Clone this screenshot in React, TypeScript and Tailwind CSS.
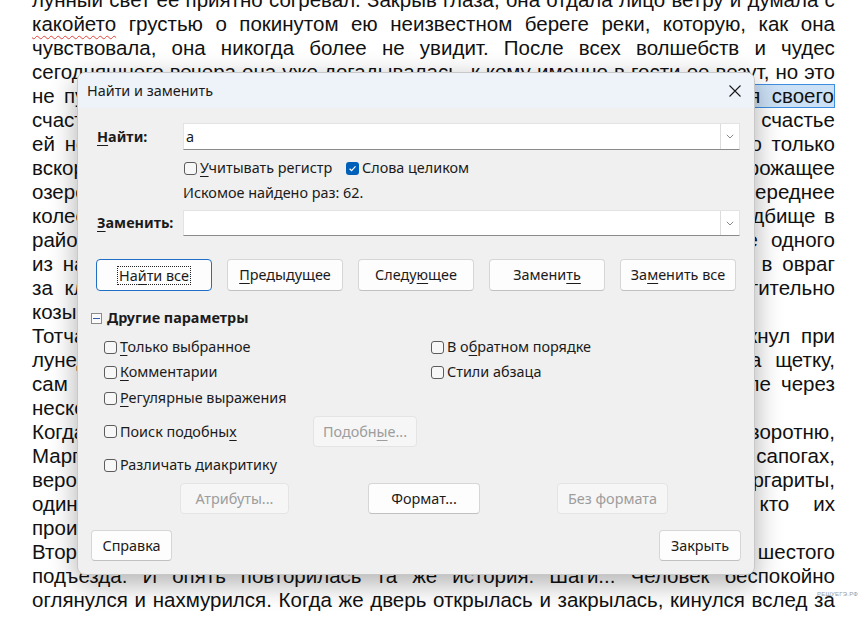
import React from "react";

type Line = { t: string; end?: boolean };

const lines: Line[] = [
  { t: "лунный свет ее приятно согревал. Закрыв глаза, она отдала лицо ветру и думала с" },
  { t: "какойето грустью о покинутом ею неизвестном береге реки, которую, как она" },
  { t: "чувствовала, она никогда более не увидит. После всех волшебств и чудес" },
  { t: "сегодняшнего вечера она уже догадывалась, к кому именно в гости ее везут, но это" },
  { t: "не пугало ее. Надежда на то, что там ей удастся добиться возвращения своего" },
  { t: "счастья, делала ее бесстрашной. Впрочем, долго мечтать об этом счастье" },
  { t: "ей не пришлось. Не то Азазелло очень хорошо знал свою дорогу, не то только" },
  { t: "вскоре машина пошла на снижение, и Маргарита увидела тусклое и дрожащее" },
  { t: "озеро. Грачи развернулись, и машина пошла вниз так круто, что переднее" },
  { t: "колесо едва не задело верхушки деревьев. Рядом оказалось старое кладбище в" },
  { t: "районе, где кончались могилы; вокруг было совершенно пусто, кроме одного" },
  { t: "из наших героев. Машина свернула, и Азазелло, не глядя, сбросил его в овраг" },
  { t: "за кладбищем, где она тотчас развалилась на части и сгорела отвратительно" },
  { t: "козырнув напоследок.", end: true },
  { t: "Тотчас Азазелло вскочил, обернулся, присел на корточки у дороги и ткнул при" },
  { t: "лунедвижимо стоявшая рядом Гелла неторопливо из сумочки достала щетку," },
  { t: "сам же оглянулся и медленно вышел на дорогу, которая уводила в поле через" },
  { t: "несколько минут.", end: true },
  { t: "Когда Маргарита обернулась, то увидела перед собой знакомую подворотню," },
  { t: "Маргарита заметила в темноте человека в кепке, в плаще и в высоких сапогах," },
  { t: "вероятно, это был кто-то из давних, тайных и верных поклонников Маргариты," },
  { t: "один из тех несчастных, о которых никто не мог сказать, кто их" },
  { t: "происходит знает.", end: true },
  { t: "Второй раз она увидела этого человека уже у самых дверей своего шестого" },
  { t: "подъезда. И опять повторилась та же история. Шаги... Человек беспокойно" },
  { t: "оглянулся и нахмурился. Когда же дверь открылась и закрылась, кинулся вслед за" },
];

function DocLine({ line, idx }: { line: Line; idx: number }) {
  if (line.end) {
    return <div className="h-[24px] leading-[24px] whitespace-nowrap">{line.t}</div>;
  }
  const words = line.t.split(" ");
  return (
    <div className="flex justify-between h-[24px] leading-[24px] whitespace-nowrap">
      {words.map((w, i) => {
        if (idx === 1 && i === 0) {
          return (
            <span key={i} className="underline decoration-wavy decoration-[#e0443a] underline-offset-[4px] decoration-1">
              {w}
            </span>
          );
        }
        if (idx === 4 && i === words.length - 2) {
          return (
            <span key={i} className="flex">
              <span>возвращени</span>
              <span className="bg-[#cce1f6] shadow-[inset_0_0_0_1px_#3f8fe0] pr-[1px]">я&nbsp;&nbsp;своего</span>
            </span>
          );
        }
        if (idx === 4 && i === words.length - 1) return null;
        return <span key={i}>{w}</span>;
      })}
    </div>
  );
}

function Check({ checked }: { checked?: boolean }) {
  if (checked) {
    return (
      <span className="w-[13px] h-[13px] rounded-[3px] bg-[#005fb8] flex items-center justify-center shrink-0">
        <svg width="9" height="9" viewBox="0 0 9 9">
          <path d="M1.6 4.7 L3.6 6.6 L7.5 2.4" fill="none" stroke="white" strokeWidth="1.2" />
        </svg>
      </span>
    );
  }
  return <span className="w-[13px] h-[13px] rounded-[3px] border border-[#5c5c5c] bg-[#f7f7f7] shrink-0" />;
}

function CB({ checked, children }: { checked?: boolean; children: React.ReactNode }) {
  return (
    <div className="flex items-center gap-[3px] whitespace-nowrap">
      <Check checked={checked} />
      <span>{children}</span>
    </div>
  );
}

function U({ children }: { children: React.ReactNode }) {
  return <span className="underline underline-offset-[3px] decoration-1">{children}</span>;
}

function Btn({
  children,
  className,
  disabled,
  focus,
}: {
  children: React.ReactNode;
  className: string;
  disabled?: boolean;
  focus?: boolean;
}) {
  const base = "h-full rounded-[4px] border flex items-center justify-center whitespace-nowrap shrink-0 ";
  const look = disabled
    ? "bg-[#f6f6f6] border-[#e4e4e4] text-[#9d9d9d] "
    : focus
    ? "bg-[#fdfdfd] border-[#1f6fc5] shadow-[inset_0_0_0_1px_#fdfdfd] "
    : "bg-[#fdfdfd] border-[#d6d6d6] border-b-[#c0c0c0] ";
  return (
    <div className={base + look + className}>
      {focus ? <span className="outline-1 outline-dotted outline-[#222] px-[1px] leading-[17px]">{children}</span> : children}
    </div>
  );
}

function Combo({ value }: { value?: string }) {
  return (
    <div className="w-[557px] h-full bg-white border border-[#e3e3e3] border-b-[#8a8a8a] flex items-center justify-between">
      <span className="pl-[2px]">{value ?? ""}</span>
      <span className="w-[19px] h-full border-l border-[#dcdcdc] flex items-center justify-center bg-white">
        <svg width="8" height="5" viewBox="0 0 8 5">
          <path d="M0.8 0.8 L4 4 L7.2 0.8" fill="none" stroke="#7a7a7a" strokeWidth="0.9" />
        </svg>
      </span>
    </div>
  );
}

export default function App() {
  return (
    <div className="relative w-[862px] h-[625px] overflow-hidden bg-white">
      <div className="ml-[32px] w-[803px] -mt-[12px] font-['Liberation_Sans',Arial,sans-serif] text-[20.5px] text-[#111]">
        {lines.map((l, i) => (
          <DocLine key={i} line={l} idx={i} />
        ))}
      </div>

      <div className="absolute left-[817px] top-[590px] text-[6px] text-[#9a9a9a] font-['Liberation_Sans',sans-serif] tracking-[0.2px]">
        РЕШУЕГЭ.РФ
      </div>

      <div className="absolute left-[77px] top-[72px] w-[678px] h-[503px] rounded-[8px] bg-[#f0f0f0] border border-[#c8c8c8] shadow-[0_8px_28px_rgba(0,0,0,0.32)] overflow-hidden flex flex-col font-['Noto_Sans',sans-serif] text-[14.4px] text-[#1b1b1b]">
        <div className="h-[35px] shrink-0 bg-[#eef2f9] flex items-center justify-between pl-[9px] pr-[13px]">
          <span>Найти и заменить</span>
          <svg width="12" height="12" viewBox="0 0 12 12">
            <path d="M0.5 0.5 L11.5 11.5 M11.5 0.5 L0.5 11.5" stroke="#1a1a1a" strokeWidth="1.1" />
          </svg>
        </div>

        <div className="flex flex-col">
          <div className="mt-[15px] h-[27px] flex items-center pl-[19px]">
            <span className="w-[86px] font-bold">
              <U>Н</U>айти:
            </span>
            <Combo value="a" />
          </div>

          <div className="mt-[8px] h-[20px] flex items-center pl-[106px]">
            <div className="w-[162px]">
              <CB>
                <U>У</U>читывать регистр
              </CB>
            </div>
            <CB checked>Слова целиком</CB>
          </div>

          <div className="mt-[5px] h-[20px] flex items-center pl-[105px]">Искомое найдено раз: 62.</div>

          <div className="mt-[7px] h-[26px] flex items-center pl-[19px]">
            <span className="w-[86px] font-bold">
              <U>З</U>аменить:
            </span>
            <Combo />
          </div>

          <div className="mt-[23px] h-[32px] flex pl-[18px] gap-[15px]">
            <Btn className="w-[116px]" focus>
              На<U>й</U>ти все
            </Btn>
            <Btn className="w-[116px]">
              <U>П</U>редыдущее
            </Btn>
            <Btn className="w-[116px]">
              Следу<U>ю</U>щее
            </Btn>
            <Btn className="w-[116px]">
              Замени<U>ть</U>
            </Btn>
            <Btn className="w-[116px]">
              За<U>м</U>енить все
            </Btn>
          </div>

          <div className="mt-[17px] h-[20px] flex items-center pl-[13px] gap-[5px]">
            <span className="w-[11px] h-[11px] border border-[#8a8a8a] bg-[#fafafa] flex items-center justify-center">
              <span className="w-[7px] h-[1px] bg-[#2f5fa8]" />
            </span>
            <span className="font-bold">Другие параметры</span>
          </div>

          <div className="mt-[9px] h-[20px] flex items-center pl-[26px]">
            <div className="w-[327px]">
              <CB>
                <U>Т</U>олько выбранное
              </CB>
            </div>
            <CB>
              В о<U>б</U>ратном порядке
            </CB>
          </div>

          <div className="mt-[5px] h-[20px] flex items-center pl-[26px]">
            <div className="w-[327px]">
              <CB>
                <U>К</U>омментарии
              </CB>
            </div>
            <CB>Стили абзаца</CB>
          </div>

          <div className="mt-[6px] h-[20px] flex items-center pl-[26px]">
            <CB>
              <U>Р</U>егулярные выражения
            </CB>
          </div>

          <div className="mt-[8px] h-[31px] flex items-center pl-[26px]">
            <div className="w-[209px]">
              <CB>
                Поиск подобны<U>х</U>
              </CB>
            </div>
            <Btn className="w-[104px]" disabled>
              Подобн<U>ы</U>е...
            </Btn>
          </div>

          <div className="mt-[8px] h-[20px] flex items-center pl-[26px]">
            <CB>Различать диакритику</CB>
          </div>

          <div className="mt-[8px] h-[31px] flex pl-[102px]">
            <Btn className="w-[109px]" disabled>
              Атрибуты...
            </Btn>
            <div className="w-[79px] shrink-0" />
            <Btn className="w-[112px]">Формат...</Btn>
            <div className="w-[77px] shrink-0" />
            <Btn className="w-[111px]" disabled>
              Без формата
            </Btn>
          </div>

          <div className="mt-[16px] h-[31px] flex justify-between pl-[13px] pr-[13px]">
            <Btn className="w-[81px]">Справка</Btn>
            <Btn className="w-[82px]">Закрыть</Btn>
          </div>
        </div>
      </div>
    </div>
  );
}
